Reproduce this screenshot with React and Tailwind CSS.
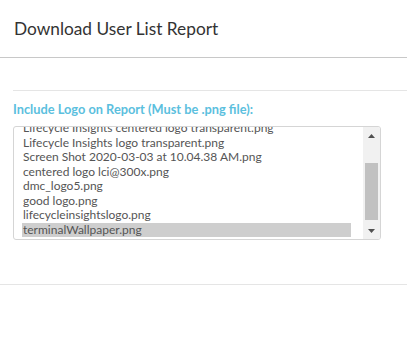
import React from "react";

const files = [
  "Lifecycle Insights centered logo transparent.png",
  "Lifecycle Insights logo transparent.png",
  "Screen Shot 2020-03-03 at 10.04.38 AM.png",
  "centered logo lci@300x.png",
  "dmc_logo5.png",
  "good logo.png",
  "lifecycleinsightslogo.png",
  "terminalWallpaper.png",
];

export default function App() {
  return (
    <div
      className="w-[407px] h-[341px] bg-white overflow-hidden"
      style={{ fontFamily: "Lato, 'Open Sans', sans-serif" }}
    >
      <div className="h-[58px] border-b border-[#c8c8c8] flex items-center pl-[14px]">
        <h1 className="text-[17.3px] leading-none text-[#333] font-normal">Download User List Report</h1>
      </div>
      <div className="pl-[13px] pt-[32px]">
        <div className="border-t border-[#e5e5e5]" />
        <div className="mt-[10px] text-[12.8px] font-bold leading-[16px] text-[#5bc0de]">
          Include Logo on Report (Must be .png file):
        </div>
        <div className="mt-[9px] w-[368px] h-[114px] border border-[#d5d5d5] rounded-[3px] flex overflow-hidden">
          <div className="flex-1 overflow-hidden pl-[8px] pr-[12px]">
            <div className="-mt-[6px] flex flex-col">
              {files.map((f, i) => (
                <div
                  key={f}
                  className={
                    "h-[14.5px] flex items-center px-[1px] text-[12px] whitespace-nowrap text-[#555] " +
                    (i === files.length - 1 ? "bg-[#cecece] text-[#333]" : "")
                  }
                >
                  {f}
                </div>
              ))}
            </div>
          </div>
          <div className="w-[17px] bg-[#f1f1f1] flex flex-col items-center">
            <div className="h-[17px] flex items-center justify-center">
              <svg width="7" height="4" viewBox="0 0 7 4"><path d="M3.5 0L7 4H0z" fill="#505050" /></svg>
            </div>
            <div className="h-[19px]" />
            <div className="w-[13px] h-[57px] bg-[#c1c1c1]" />
            <div className="flex-1" />
            <div className="h-[17px] flex items-center justify-center">
              <svg width="7" height="4" viewBox="0 0 7 4"><path d="M0 0H7L3.5 4z" fill="#505050" /></svg>
            </div>
          </div>
        </div>
      </div>
      <div className="mt-[44px] border-t border-[#e5e5e5]" />
    </div>
  );
}
